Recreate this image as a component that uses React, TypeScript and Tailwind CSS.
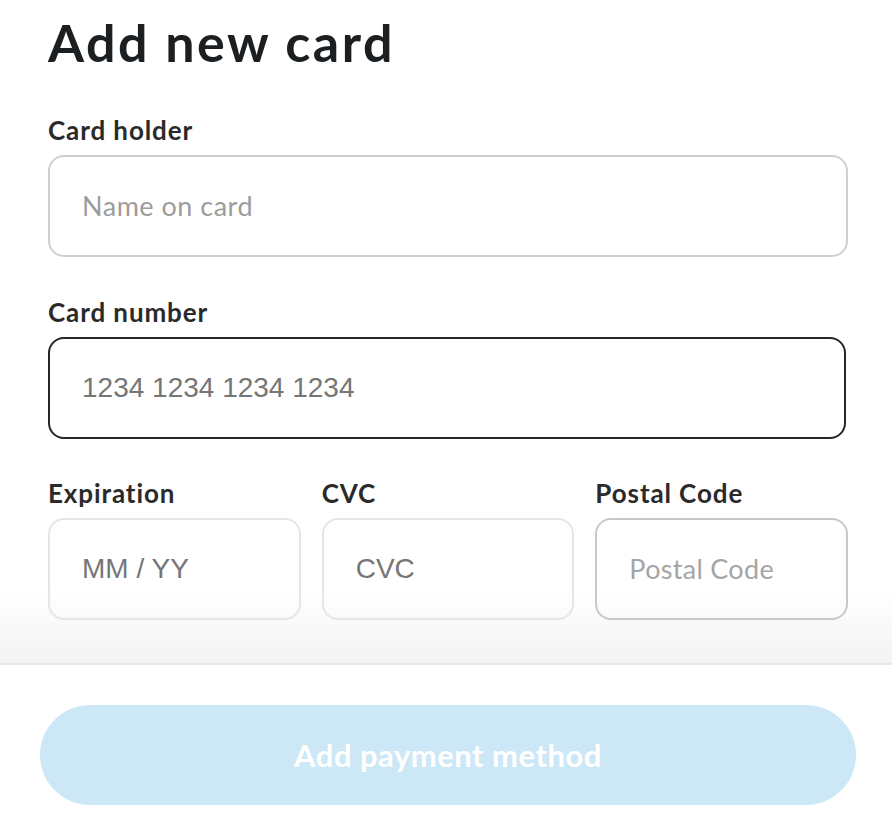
import React from 'react';

const sans = "font-['Lato','Noto_Sans',sans-serif]";
const arial = "font-['Liberation_Sans',Arial,sans-serif]";

function Field({
    label,
    placeholder,
    border,
    placeholderClass,
    className = '',
}: {
    label: string;
    placeholder: string;
    border: string;
    placeholderClass: string;
    className?: string;
}) {
    return (
        <div className={`flex flex-col ${className}`}>
            <label className={`${sans} text-[26px] leading-[30px] font-bold tracking-[0.9px] text-[#2a2a2a]`}>{label}</label>
            <div className={`mt-[10px] h-[102px] rounded-[16px] flex items-center pl-[32px] ${border}`}>
                <span className={placeholderClass}>{placeholder}</span>
            </div>
        </div>
    );
}

export default function App() {
    const proximaPh = `${sans} text-[27px] tracking-[0.5px] text-[#9c9c9c]`;
    const arialPh = `${arial} text-[28px] text-[#767676]`;

    return (
        <div className="w-[892px] h-[826px] bg-white overflow-hidden flex flex-col">
            <div className="flex flex-col pl-[48px] pr-[44px] pt-[12px] bg-[linear-gradient(to_bottom,#ffffff_0px,#ffffff_590px,#f3f3f4_663px)] border-b-2 border-[#e7e7ea] h-[665px]">
                <h1 className={`${sans} text-[52px] leading-[60px] font-bold text-[#1c1f22] tracking-[2.5px]`}>Add new card</h1>

                <Field
                    className="mt-[43px]"
                    label="Card holder"
                    placeholder="Name on card"
                    border="border-2 border-[#cfcfcf]"
                    placeholderClass={proximaPh}
                />
                <Field
                    className="mt-[40px] mr-[2px]"
                    label="Card number"
                    placeholder="1234 1234 1234 1234"
                    border="border-2 border-[#262626]"
                    placeholderClass={arialPh}
                />
                <div className="mt-[39px] grid grid-cols-3 gap-[21px]">
                    <Field
                        label="Expiration"
                        placeholder="MM / YY"
                        border="border-2 border-[#e6e6e6]"
                        placeholderClass={arialPh}
                    />
                    <Field
                        label="CVC"
                        placeholder="CVC"
                        border="border-2 border-[#e6e6e6]"
                        placeholderClass={arialPh}
                    />
                    <Field
                        label="Postal Code"
                        placeholder="Postal Code"
                        border="border-2 border-[#c8c8c8]"
                        placeholderClass={`${sans} text-[27px] tracking-[0.3px] text-[#a5a5a5]`}
                    />
                </div>
            </div>

            <div className="px-[40px] pt-[40px]">
                <button className={`${sans} w-[816px] h-[100px] rounded-full bg-[#cce8f7] text-white text-[31px] tracking-[0.5px] font-bold`}>
                    Add payment method
                </button>
            </div>
        </div>
    );
}
